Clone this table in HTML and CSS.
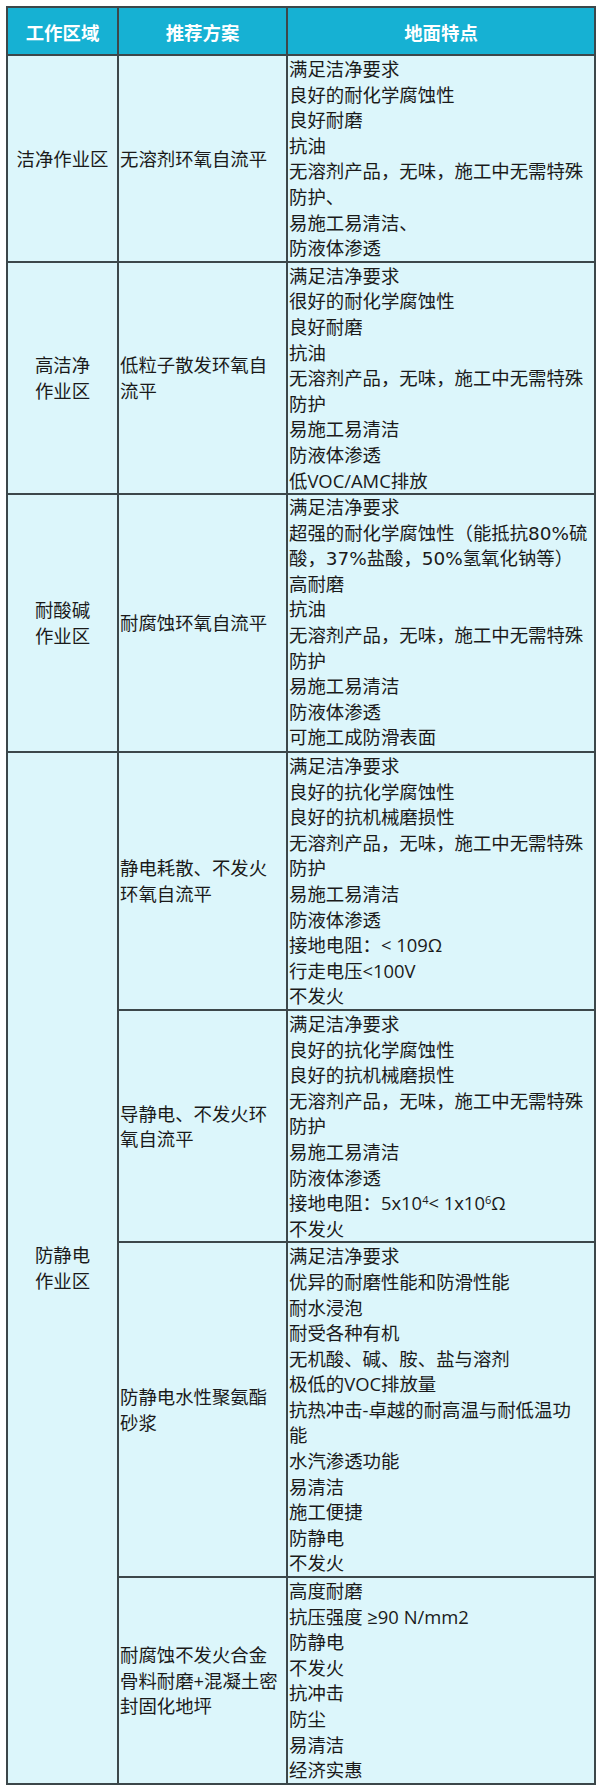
FILE: index.html
```html
<!DOCTYPE html>
<html lang="zh-CN">
<head>
<meta charset="utf-8">
<link rel="stylesheet" href="styles.css">
</head>
<body>
<table class="spec">
  <colgroup>
    <col class="c-area">
    <col class="c-plan">
    <col class="c-feat">
  </colgroup>
  <thead>
    <tr>
      <th>工作区域</th>
      <th>推荐方案</th>
      <th>地面特点</th>
    </tr>
  </thead>
  <tbody>
    <tr>
      <td class="area">洁净作业区</td>
      <td class="plan">无溶剂环氧自流平</td>
      <td class="feat">满足洁净要求<br>良好的耐化学腐蚀性<br>良好耐磨<br>抗油<br>无溶剂产品，无味，施工中无需特殊<br>防护、<br>易施工易清洁、<br>防液体渗透</td>
    </tr>
    <tr>
      <td class="area">高洁净<br>作业区</td>
      <td class="plan">低粒子散发环氧自<br>流平</td>
      <td class="feat">满足洁净要求<br>很好的耐化学腐蚀性<br>良好耐磨<br>抗油<br>无溶剂产品，无味，施工中无需特殊<br>防护<br>易施工易清洁<br>防液体渗透<br>低VOC/AMC排放</td>
    </tr>
    <tr>
      <td class="area">耐酸碱<br>作业区</td>
      <td class="plan">耐腐蚀环氧自流平</td>
      <td class="feat alt">满足洁净要求<br>超强的耐化学腐蚀性（能抵抗80%硫<br>酸，37%盐酸，50%氢氧化钠等）<br>高耐磨<br>抗油<br>无溶剂产品，无味，施工中无需特殊<br>防护<br>易施工易清洁<br>防液体渗透<br>可施工成防滑表面</td>
    </tr>
    <tr>
      <td class="area" rowspan="4">防静电<br>作业区</td>
      <td class="plan">静电耗散、不发火<br>环氧自流平</td>
      <td class="feat">满足洁净要求<br>良好的抗化学腐蚀性<br>良好的抗机械磨损性<br>无溶剂产品，无味，施工中无需特殊<br>防护<br>易施工易清洁<br>防液体渗透<br>接地电阻：&lt; 109Ω<br>行走电压&lt;100V<br>不发火</td>
    </tr>
    <tr>
      <td class="plan">导静电、不发火环<br>氧自流平</td>
      <td class="feat">满足洁净要求<br>良好的抗化学腐蚀性<br>良好的抗机械磨损性<br>无溶剂产品，无味，施工中无需特殊<br>防护<br>易施工易清洁<br>防液体渗透<br>接地电阻：5x10<sup>4</sup>&lt; 1x10<sup>6</sup>Ω<br>不发火</td>
    </tr>
    <tr>
      <td class="plan">防静电水性聚氨酯<br>砂浆</td>
      <td class="feat">满足洁净要求<br>优异的耐磨性能和防滑性能<br>耐水浸泡<br>耐受各种有机<br>无机酸、碱、胺、盐与溶剂<br>极低的VOC排放量<br>抗热冲击-卓越的耐高温与耐低温功<br>能<br>水汽渗透功能<br>易清洁<br>施工便捷<br>防静电<br>不发火</td>
    </tr>
    <tr>
      <td class="plan">耐腐蚀不发火合金<br>骨料耐磨+混凝土密<br>封固化地坪</td>
      <td class="feat">高度耐磨<br>抗压强度 ≥90 N/mm2<br>防静电<br>不发火<br>抗冲击<br>防尘<br>易清洁<br>经济实惠</td>
    </tr>
  </tbody>
</table>
</body>
</html>
```
FILE: styles.css
```css
html, body {
  margin: 0;
  padding: 0;
  background: #ffffff;
}
body {
  padding: 6px;
  font-family: "Open Sans", "Noto Sans CJK SC", sans-serif;
}
.spec {
  width: 588px;
  border-collapse: collapse;
  table-layout: fixed;
  font-size: 18.4px;
  line-height: 25.6px;
  color: #1a1a1a;
}
.c-area { width: 111px; }
.c-plan { width: 169px; }
.c-feat { width: 308px; }
.spec th,
.spec td {
  border: 2px solid #3c474a;
  padding: 0 1px;
}
.spec th {
  background: #16b1d3;
  color: #ffffff;
  font-weight: bold;
  height: 43px;
  padding-top: 3px;
  text-align: center;
  vertical-align: middle;
}
.spec td {
  background: #dcf6fb;
  vertical-align: middle;
}
.spec td.area {
  text-align: center;
}
.spec td.plan {
  text-align: left;
}
.spec td.feat {
  text-align: left;
  vertical-align: top;
}
.spec td.feat.alt {
  font-family: "DejaVu Sans", "Noto Sans CJK SC", sans-serif;
}
.spec sup {
  font-size: 11px;
  line-height: 0;
  vertical-align: 6px;
}
```
